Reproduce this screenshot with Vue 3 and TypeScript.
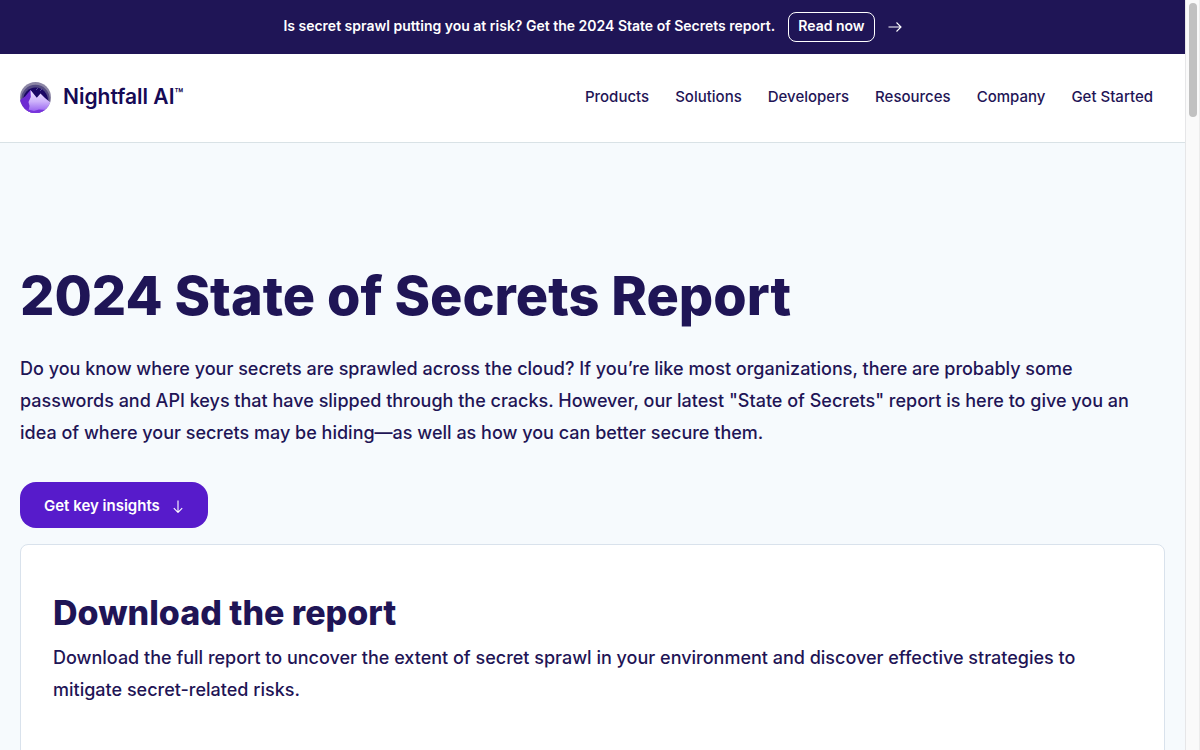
<script setup lang="ts">
const links: string[] = ['Products', 'Solutions', 'Developers', 'Resources', 'Company', 'Get Started']
</script>

<template>
  <div class="shell">
    <div class="page">
      <aside class="banner">
        <p>Is secret sprawl putting you at risk? Get the 2024 State of Secrets report.</p>
        <a class="read" href="#report">Read now</a>
        <svg width="14" height="12" viewBox="0 0 14 12" fill="none" stroke="currentColor" stroke-width="1.1" aria-hidden="true">
          <path d="M0.5 6H13M8.5 1.5L13 6L8.5 10.5" />
        </svg>
      </aside>
      <header class="header">
        <a class="brand" href="#home">
          <svg width="31" height="31" viewBox="0 0 31 31" aria-hidden="true">
            <defs>
              <linearGradient id="ridge" x1="0" y1="0" x2="0" y2="1">
                <stop offset="0" stop-color="#eee6ff" />
                <stop offset="0.5" stop-color="#cdb2fb" />
                <stop offset="1" stop-color="#8f57ee" />
              </linearGradient>
              <clipPath id="disc"><circle cx="15.5" cy="15.5" r="15.5" /></clipPath>
            </defs>
            <g clip-path="url(#disc)">
              <rect width="31" height="31" fill="#8c86a5" />
              <circle cx="15.5" cy="17" r="14.2" fill="#544b83" />
              <circle cx="15.5" cy="18" r="12.4" fill="#1a0764" />
              <path d="M16 8L18 6M20 9L22 7" stroke="#7466b4" stroke-width="0.7" />
              <path d="M0 18L5 14.5L10.5 8L14 13L20 31H0Z" fill="#6d2bd2" />
              <path d="M10.5 8L16.8 15.8L20.5 11.5L25 16L31 21V31H8L9.5 24L8.5 20L10.8 15Z" fill="url(#ridge)" />
              <path d="M2 26L8 27.5L14 29L19 27.5L26 28L22 31H6Z" fill="#7934dc" />
            </g>
          </svg>
          <span class="name">Nightfall AI<sup>™</sup></span>
        </a>
        <nav class="nav" aria-label="Main">
          <a v-for="link in links" :key="link" href="#menu">{{ link }}</a>
        </nav>
      </header>
      <main class="main">
        <h1>2024 State of Secrets Report</h1>
        <p class="copy">Do you know where your secrets are sprawled across the cloud? If you’re like most organizations, there are probably some passwords and API keys that have slipped through the cracks. However, our latest "State of Secrets" report is here to give you an idea of where your secrets may be hiding—as well as how you can better secure them.</p>
        <a class="cta" href="#insights">
          Get key insights
          <svg width="12" height="14" viewBox="0 0 12 14" fill="none" stroke="currentColor" stroke-width="1.1" aria-hidden="true">
            <path d="M6 1.5V13.4M1.8 9.2L6 13.4L10.2 9.2" />
          </svg>
        </a>
        <section id="report" class="card">
          <h2>Download the report</h2>
          <p class="copy">Download the full report to uncover the extent of secret sprawl in your environment and discover effective strategies to mitigate secret-related risks.</p>
        </section>
      </main>
    </div>
    <div class="track" aria-hidden="true"><div class="thumb"></div></div>
  </div>
</template>

<style>
body { margin: 0; }
</style>

<style scoped>
.shell {
  display: flex;
  height: 100vh;
  overflow: hidden;
  background: #f6fafd;
  color: #1f1556;
  font-family: Inter, "Open Sans", sans-serif;
  font-weight: 600;
}
.page { flex: 1; min-width: 0; display: flex; flex-direction: column; }
.shell a { color: inherit; text-decoration: none; }
p, h1, h2 { margin: 0; }
.banner {
  box-sizing: border-box;
  display: flex;
  align-items: center;
  justify-content: center;
  gap: 13px;
  height: 54px;
  flex: none;
  background: #1f1556;
  color: #fff;
  font-size: 14px;
  line-height: 20px;
}
.banner p { padding-bottom: 2px; }
.read { border: 1px solid #fff; border-radius: 8px; padding: 3px 9px 5px; }
.header {
  box-sizing: border-box;
  display: flex;
  align-items: center;
  justify-content: space-between;
  height: 89px;
  flex: none;
  padding: 0 32px 2px 20px;
  background: #fff;
  border-bottom: 1px solid #d9e2e6;
}
.brand { display: flex; align-items: center; gap: 12px; }
.name { font-size: 21px; line-height: 28px; color: #160a55; }
.name sup { font-size: 14px; line-height: 0; vertical-align: 5px; }
.nav { display: flex; gap: 26px; font-size: 15px; line-height: 24px; font-weight: 500; }
.main {
  display: flex;
  flex-direction: column;
  align-items: flex-start;
  flex: 1;
  min-height: 0;
  padding: 120px 20px 0;
}
h1 { font-size: 54px; line-height: 66px; font-weight: 800; }
.copy { font-size: 18px; line-height: 32px; font-weight: 500; }
h1 + .copy { margin-top: 24px; }
.cta {
  display: flex;
  align-items: center;
  gap: 12px;
  margin-top: 33px;
  padding: 12px 24px 10px;
  border-radius: 16px;
  background: #571bcb;
  font-size: 15px;
  line-height: 24px;
}
.shell .cta { color: #fff; }
.card {
  box-sizing: border-box;
  width: 100%;
  flex: 1 0 auto;
  margin-top: 16px;
  padding: 44px 32px 60px;
  border: 1px solid #d9e2ec;
  border-radius: 8px;
  background: #fff;
}
h2 { font-size: 34px; line-height: 48px; font-weight: 800; }
h2 + .copy { margin-top: 5px; }
.track {
  box-sizing: border-box;
  width: 15px;
  flex: none;
  padding: 3px;
  background: #fafafa;
  border-left: 1px solid #e6e6e8;
  border-right: 1px solid #ececec;
}
.thumb { width: 8px; height: 114px; border-radius: 4px; background: #c1c1c1; }
</style>
